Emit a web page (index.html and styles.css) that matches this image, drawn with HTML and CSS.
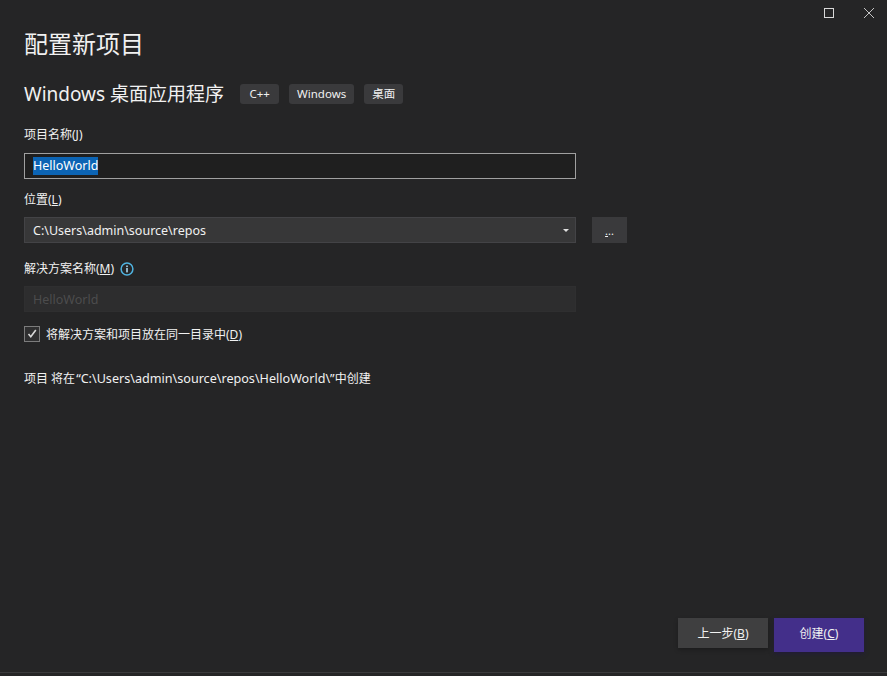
FILE: index.html
```html
<!DOCTYPE html>
<html lang="zh-CN">
<head>
  <meta charset="UTF-8">
  <title>配置新项目</title>
  <link rel="stylesheet" href="styles.css">
</head>
<body>
  <div class="window">
    <!-- Window buttons -->
    <div class="titlebar">
      <svg class="win-icon max-icon" width="10" height="10" viewBox="0 0 10 10"><rect x="0.5" y="0.5" width="9" height="9" fill="none" stroke="#d8d8d8"/></svg>
      <svg class="win-icon" width="10" height="10" viewBox="0 0 10 10"><path d="M0 0L10 10M10 0L0 10" stroke="#c4c4c4" fill="none"/></svg>
    </div>

    <div class="content">
      <h1>配置新项目</h1>

      <div class="template-row">
        <h2>Windows 桌面应用程序</h2>
        <div class="chips">
          <span class="chip">C++</span>
          <span class="chip">Windows</span>
          <span class="chip">桌面</span>
        </div>
      </div>

      <label class="field-label name-label">项目名称(<u>J</u>)</label>
      <div class="field-row">
        <div class="input input-focus"><span class="selected">HelloWorld</span></div>
      </div>

      <label class="field-label">位置(<u>L</u>)</label>
      <div class="field-row">
        <div class="input input-combo">
          <span>C:\Users\admin\source\repos</span>
          <span class="arrow"></span>
        </div>
        <div class="browse-btn"><u>.</u>..</div>
      </div>

      <label class="field-label info-label">
        <span>解决方案名称(<u>M</u>)</span>
        <svg class="info-icon" width="14" height="14" viewBox="0 0 14 14">
          <circle cx="7" cy="7" r="5.9" fill="none" stroke="#4fb3e0" stroke-width="1.5"/>
          <rect x="6.2" y="6" width="1.6" height="4.4" fill="#a8d8f0"/>
          <rect x="6.2" y="3.5" width="1.6" height="1.6" fill="#a8d8f0"/>
        </svg>
      </label>
      <div class="field-row">
        <div class="input input-disabled">HelloWorld</div>
      </div>

      <div class="check-row">
        <span class="checkbox">
          <svg width="14" height="14" viewBox="0 0 14 14"><path d="M3.5 7L5.8 9.8L10.8 3" fill="none" stroke="#d8d8d8" stroke-width="1.6"/></svg>
        </span>
        <span>将解决方案和项目放在同一目录中(<u>D</u>)</span>
      </div>

      <p class="path-note">项目 将在<span class="path">“C:\Users\admin\source\repos\HelloWorld\”</span>中创建</p>
    </div>

    <div class="footer">
      <button type="button" class="btn btn-back">上一步(<u>B</u>)</button>
      <button type="button" class="btn btn-create">创建(<u>C</u>)</button>
    </div>
  </div>
</body>
</html>
```

FILE: styles.css
```css
* { box-sizing: border-box; }

html, body {
  margin: 0;
  padding: 0;
  height: 100%;
  overflow: hidden;
}

body {
  font-family: "Noto Sans", "Noto Sans CJK SC", sans-serif;
  font-size: 12px;
  background: #252526;
  color: #f1f1f1;
}

.window {
  display: flex;
  flex-direction: column;
  height: 676px;
  padding-bottom: 3px;
}

.titlebar {
  display: flex;
  justify-content: flex-end;
  gap: 30px;
  padding: 8px 13px 0 0;
  height: 28px;
}

.win-icon { display: block; }

.content {
  flex: 1;
  padding: 0 0 0 24px;
}

h1 {
  margin: 0;
  height: 32px;
  font-size: 24px;
  line-height: 32px;
  font-weight: 400;
}

.template-row {
  display: flex;
  align-items: center;
  margin-top: 24px;
  height: 20px;
}

h2 {
  margin: 0;
  font-size: 19px;
  font-weight: 400;
  line-height: 20px;
}

.chips {
  display: flex;
  gap: 10px;
  margin-left: 16px;
}

.chip {
  min-width: 39px;
  height: 20px;
  padding: 0 8px;
  line-height: 20px;
  text-align: center;
  font-size: 11.5px;
  background: #3a3a3c;
  border-radius: 3px;
}

.field-label {
  display: block;
  height: 18px;
  line-height: 18px;
  margin: 12px 0 8px;
}

.name-label { margin: 22px 0 9px; }

.info-label {
  display: flex;
  align-items: center;
  gap: 6px;
  margin-top: 17px;
}

.field-row {
  display: flex;
  gap: 16px;
  width: 603px;
}

.input {
  display: flex;
  align-items: center;
  justify-content: space-between;
  width: 552px;
  height: 26px;
  padding: 0 8px;
  font-size: 12.5px;
}

.input-focus {
  background: #1f1f1f;
  border: 1px solid #a0a0a0;
}

.selected {
  background: #0c64b4;
  color: #fff;
  line-height: 18px;
}

.input-combo {
  background: #373738;
  border: 1px solid #434346;
}

.arrow {
  width: 0;
  height: 0;
  border-left: 3px solid transparent;
  border-right: 3px solid transparent;
  border-top: 3px solid #e0e0e0;
  margin-right: -2px;
}

.input-disabled {
  background: #2d2d2e;
  border: 1px solid #2f2f30;
  color: #4c4c4d;
}

.browse-btn {
  width: 35px;
  height: 26px;
  background: #3a3a3c;
  font-size: 11px;
  text-align: center;
  line-height: 28px;
}

.check-row {
  display: flex;
  align-items: center;
  gap: 6px;
  margin-top: 14px;
  height: 16px;
}

.checkbox {
  display: flex;
  align-items: center;
  justify-content: center;
  width: 16px;
  height: 16px;
  background: #2f2f30;
  border: 1px solid #7c7c7c;
}

.path-note {
  margin: 28px 0 0;
  line-height: 18px;
}

.path {
  margin-left: 1px;
  font-size: 12.6px;
}

.footer {
  display: flex;
  justify-content: flex-end;
  gap: 6px;
  height: 55px;
  padding: 0 23px 0 0;
  border-bottom: 1px solid #3a3a3c;
}

.btn {
  width: 90px;
  height: 30px;
  border: 0;
  padding: 0;
  font: inherit;
  color: #f1f1f1;
}

.btn-back {
  background: #3f3f40;
  box-shadow: 0 2px 4px rgba(0, 0, 0, 0.25);
}

.btn-create {
  height: 34px;
  padding-bottom: 4px;
  background: #432f8a;
  box-shadow: 0 2px 4px rgba(30, 20, 70, 0.5);
}
```
